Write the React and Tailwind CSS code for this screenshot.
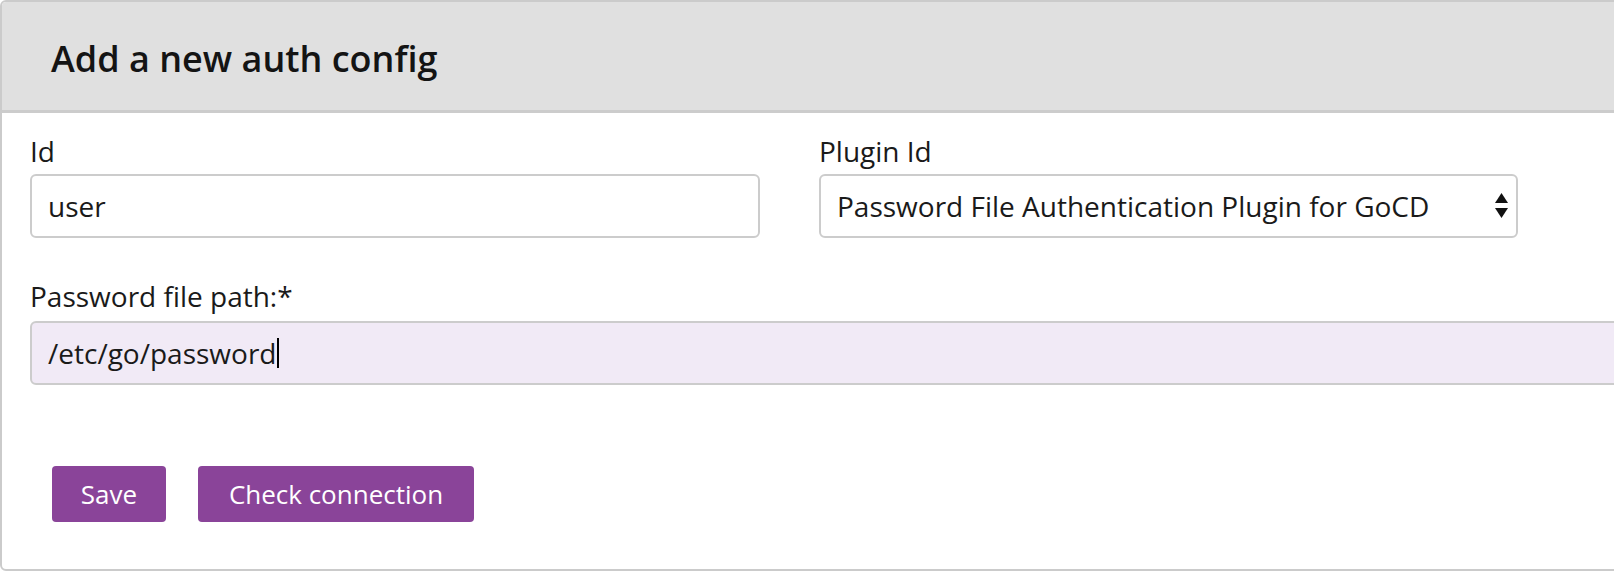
import React from 'react';

const SortArrows = () => (
  <svg width="13" height="26" viewBox="0 0 13 26" className="shrink-0">
    <path d="M6.5 0 L13 10 L0 10 Z" fill="#111" />
    <path d="M0 15 L13 15 L6.5 25 Z" fill="#111" />
  </svg>
);

const AuthConfigForm = () => {
  return (
    <div className="w-screen h-screen overflow-hidden bg-white font-['Open_Sans',sans-serif] text-[#1a1a1a]">
      <div className="w-[1720px] h-[571px] border-2 border-[#cbcbcb] rounded-[6px] overflow-hidden flex flex-col">
        {/* Header */}
        <div className="h-[111px] shrink-0 bg-[#e0e0e0] border-b-[3px] border-[#cccccc] flex items-center pl-[49px]">
          <h1 className="text-[36px] font-semibold leading-[44px] text-[#141414] pt-[5px]">Add a new auth config</h1>
        </div>

        {/* Body */}
        <div className="pl-[28px] pt-[19px]">
          <div className="flex">
            <div className="w-[789px]">
              <label className="block text-[28px] leading-[38px] mb-[4px]">Id</label>
              <div className="w-[730px] h-[64px] border-2 border-[#cccccc] rounded-[6px] bg-white flex items-center pl-[16px] text-[28px]">
                user
              </div>
            </div>
            <div>
              <label className="block text-[28px] leading-[38px] mb-[4px]">Plugin Id</label>
              <div className="w-[699px] h-[64px] border-2 border-[#cccccc] rounded-[6px] bg-white flex items-center justify-between pl-[16px] pr-[8px] text-[28px]">
                <span>Password File Authentication Plugin for GoCD</span>
                <SortArrows />
              </div>
            </div>
          </div>

          <div className="mt-[39px]">
            <label className="block text-[28px] leading-[38px] mb-[6px]">Password file path:*</label>
            <div className="h-[64px] border-2 border-[#cccccc] rounded-[6px] bg-[#f1eaf6] flex items-center pl-[16px] text-[28px]">
              <span>/etc/go/password</span>
              <span className="inline-block w-[2px] h-[30px] bg-black ml-[1px]"></span>
            </div>
          </div>

          <div className="flex gap-[32px] mt-[81px] pl-[22px]">
            <button className="h-[56px] w-[114px] bg-[#8a4499] text-white text-[26px] rounded-[4px]">Save</button>
            <button className="h-[56px] w-[276px] bg-[#8a4499] text-white text-[26px] rounded-[4px]">Check connection</button>
          </div>
        </div>
      </div>
    </div>
  );
};

export default AuthConfigForm;
